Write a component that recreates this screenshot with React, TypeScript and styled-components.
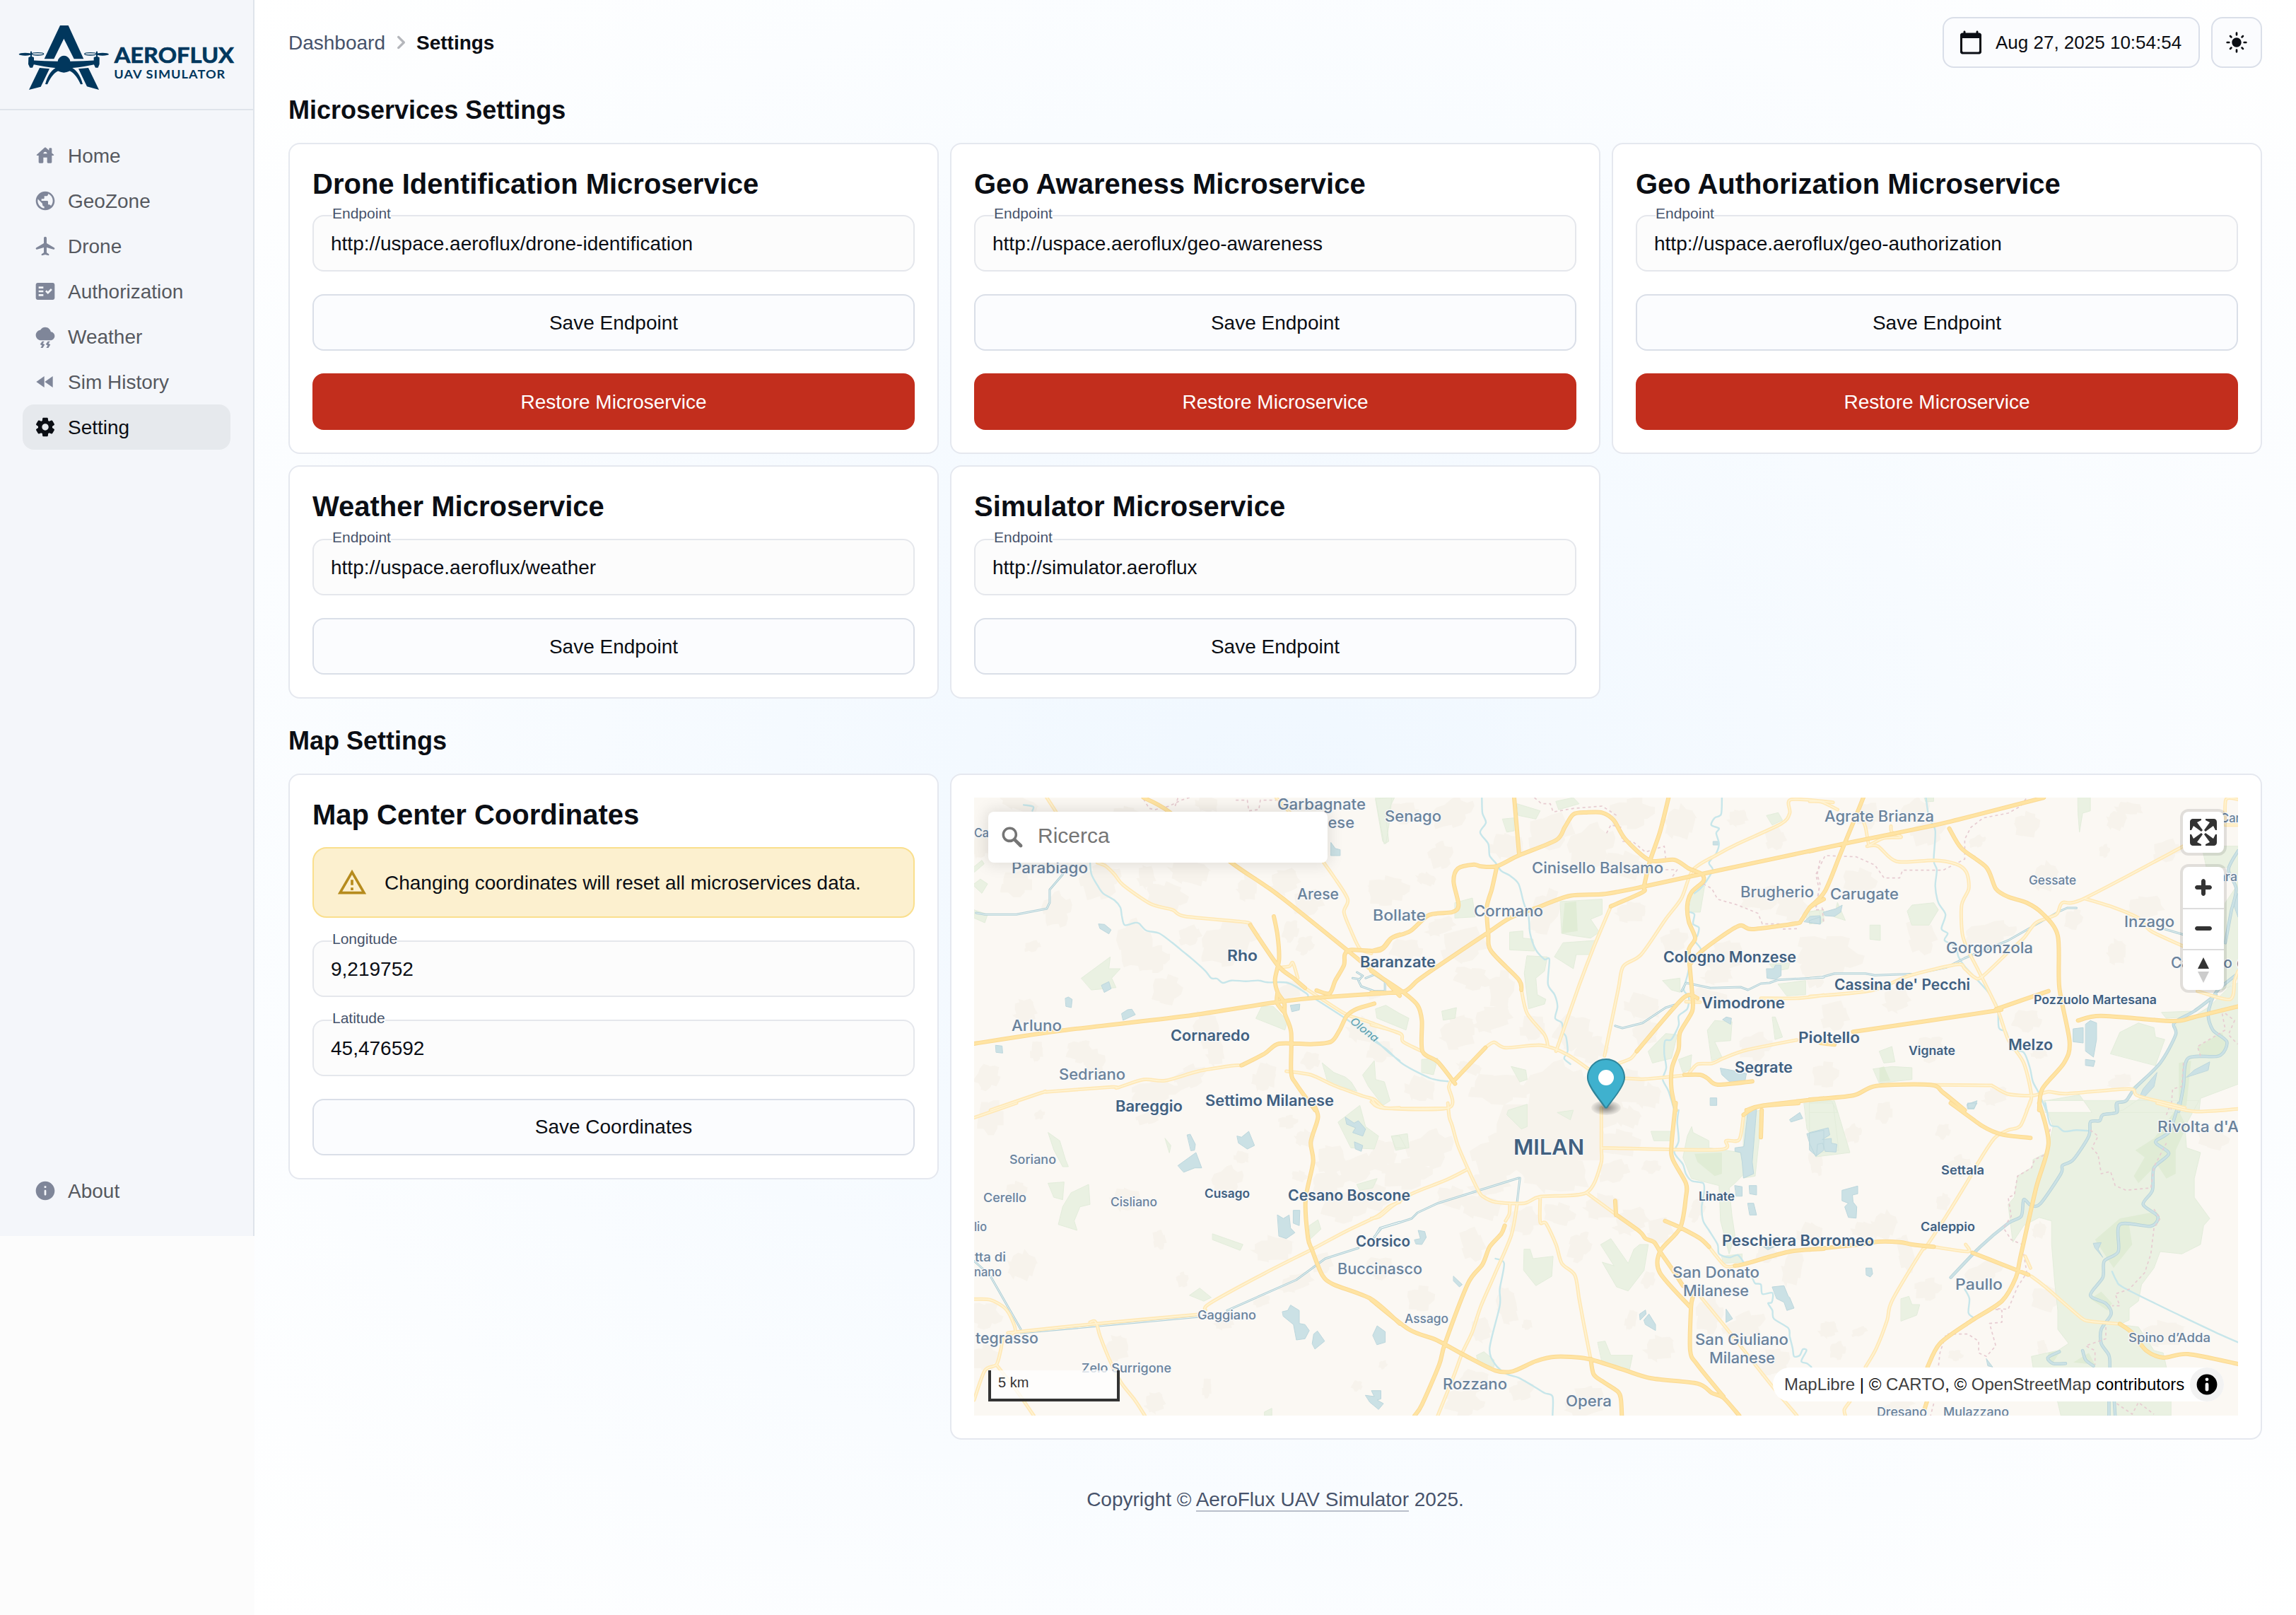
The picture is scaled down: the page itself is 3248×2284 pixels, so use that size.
import React from "react";
import styled, { createGlobalStyle, css } from "styled-components";

const GlobalStyle = createGlobalStyle`
  * { box-sizing: border-box; }
  body {
    margin: 0;
    background: #fcfcfc;
    color: #0b0e14;
    font-family: "Liberation Sans", Arial, sans-serif;
    font-size: 28px;
  }
`;

/* ---------- layout ---------- */

const Page = styled.div`
  display: grid;
  grid-template-columns: 360px 1fr;
  height: 2284px;
  overflow: hidden;
`;

const Sidebar = styled.aside`
  height: 1748px;
  display: flex;
  flex-direction: column;
  background: #f4f6fa;
  border-right: 2px solid #dfe4eb;
`;

const LogoArea = styled.div`
  height: 156px;
  border-bottom: 2px solid #dfe4eb;
  flex: none;
  svg { display: block; }
`;

const Nav = styled.nav<{ $grow?: boolean }>`
  display: flex;
  flex-direction: column;
  padding: 32px;
  ${(p) => p.$grow && css`flex: 1;`}
`;

const NavItem = styled.a<{ $active?: boolean }>`
  display: flex;
  align-items: center;
  gap: 16px;
  width: 294px;
  height: 64px;
  padding: 0 16px;
  border-radius: 16px;
  color: ${(p) => (p.$active ? "#0b0e14" : "#56595f")};
  background: ${(p) => (p.$active ? "#e6e9ed" : "transparent")};
  svg { fill: ${(p) => (p.$active ? "#0b0e14" : "#7f8699")}; }
  span { padding-top: 2px; }
`;

const Main = styled.main`
  display: flex;
  flex-direction: column;
  padding: 24px 48px 0;
  background: radial-gradient(ellipse at 50% 50%, hsl(210, 100%, 97%), hsl(0, 0%, 100%));
`;

const Header = styled.header`
  display: flex;
  align-items: center;
  justify-content: space-between;
  height: 72px;
  margin-bottom: 32px;
`;

const Breadcrumbs = styled.div`
  display: flex;
  align-items: center;
  color: #47536b;
  svg { fill: #b4b6bb; margin: 0 2px; }
  span, strong { padding-top: 2px; }
  strong { color: #0b0e14; }
`;

const HeaderTools = styled.div`
  display: flex;
  gap: 16px;
`;

const HeaderButton = styled.div<{ $width: number }>`
  display: flex;
  align-items: center;
  gap: 17px;
  width: ${(p) => p.$width}px;
  height: 72px;
  padding: 0 ${(p) => (p.$width > 72 ? 20 : 18)}px;
  border: 2px solid #dadfe9;
  border-radius: 16px;
  background: #fbfcfe;
  font-size: 26px;
  white-space: nowrap;
  svg { fill: #0b0e14; flex: none; }
`;

const SectionTitle = styled.h2`
  margin: 0 0 20px;
  height: 54px;
  padding-top: 1px;
  font-size: 36px;
  line-height: 54px;
  font-weight: 700;
`;

const CardGrid = styled.section`
  display: grid;
  grid-template-columns: repeat(3, 920px);
  gap: 16px;
  align-items: start;
  margin-bottom: 32px;
`;

const Card = styled.article<{ $span?: number }>`
  display: flex;
  flex-direction: column;
  gap: 32px;
  padding: 32px;
  border: 2px solid #e5e8ef;
  border-radius: 16px;
  background: #fff;
  grid-column: span ${(p) => p.$span ?? 1};
`;

const CardTitle = styled.h3<{ $gap: number }>`
  margin: 0 0 ${(p) => p.$gap - 34}px;
  font-size: 40px;
  line-height: 46px;
  padding-top: 1px;
  height: 48px;
  font-weight: 700;
`;

const FieldBox = styled.label`
  position: relative;
  display: flex;
  align-items: center;
  height: 80px;
  padding: 2px 24px 0;
  border: 2px solid #e5e7ec;
  border-radius: 16px;
  background: #fcfcfc;
`;

const FieldLabel = styled.span`
  position: absolute;
  left: 26px;
  top: -16px;
  font-size: 21px;
  line-height: 24px;
  color: #47536b;
  background: linear-gradient(#fff 14px, #fcfcfc 14px);
`;

const Button = styled.button<{ $danger?: boolean; $lift?: boolean }>`
  height: 80px;
  padding: ${(p) => (p.$lift ? "0 0 1px" : "2px 0 0")};
  border-radius: 16px;
  font: 28px "Liberation Sans", Arial, sans-serif;
  border: 2px solid ${(p) => (p.$danger ? "#c22e1d" : "#dadfe8")};
  background: ${(p) => (p.$danger ? "#c22e1d" : "#fbfcfe")};
  color: ${(p) => (p.$danger ? "#fff" : "#0b0e14")};
`;

const Alert = styled.div`
  display: flex;
  align-items: center;
  gap: 24px;
  height: 100px;
  padding: 0 32px;
  border: 2px solid #fadf8d;
  border-radius: 20px;
  background: #fcf0cf;
  white-space: nowrap;
  svg { fill: #b68b1d; flex: none; }
  span { padding-top: 2px; }
`;

const Footer = styled.footer`
  margin-top: 36px;
  text-align: center;
  color: #47536b;
  line-height: 34px;
  a { border-bottom: 2px solid #b9bfca; }
`;

/* ---------- map ---------- */

const MapView = styled.div`
  position: relative;
  width: 1788px;
  height: 874px;
  overflow: hidden;
  background: #fbf8f3;
  > svg { display: block; }
`;

const SearchBox = styled.div`
  position: absolute;
  left: 20px;
  top: 20px;
  width: 480px;
  height: 72px;
  display: flex;
  align-items: center;
  gap: 16px;
  padding-left: 14px;
  border-radius: 8px;
  background: #fff;
  box-shadow: 0 0 20px 4px rgba(0, 0, 0, 0.1);
  color: #757575;
  font-size: 30px;
  svg { fill: #757575; }
  span { padding-bottom: 4px; }
`;

const ControlStack = styled.div`
  position: absolute;
  top: 20px;
  right: 20px;
  display: flex;
  flex-direction: column;
  gap: 20px;
`;

const ControlGroup = styled.div`
  width: 58px;
  border-radius: 8px;
  background: #fff;
  box-shadow: 0 0 0 4px rgba(0, 0, 0, 0.1);
`;

const ControlButton = styled.div`
  height: 58px;
  overflow: hidden;
  svg { display: block; fill: #333; }
  & + & { border-top: 2px solid #ddd; }
  & + & svg { margin-top: -2px; }
`;

const Scale = styled.div`
  position: absolute;
  left: 20px;
  bottom: 20px;
  width: 186px;
  height: 44px;
  padding: 3px 10px;
  border: 4px solid #333;
  border-top: 0;
  background: rgba(255, 255, 255, 0.75);
  color: #333;
  font-size: 20px;
  line-height: 28px;
`;

const Attribution = styled.div`
  position: absolute;
  right: 20px;
  bottom: 20px;
  height: 48px;
  width: 638px;
  display: flex;
  align-items: center;
  justify-content: space-between;
  padding-left: 16px;
  border-radius: 24px;
  background: #fff;
  color: #000;
  font-size: 24px;
  white-space: nowrap;
  a { color: #404040; }
`;

const InfoDot = styled.span`
  width: 48px;
  height: 48px;
  border-radius: 50%;
  background: #f2f2f2;
  svg { display: block; }
`;

const PinLayer = styled.svg`
  position: absolute;
  left: 867px;
  top: 369px;
  overflow: visible;
`;

/* ---------- icons ---------- */

const Icon = ({ d, size = 32 }: { d: string; size?: number }) => (
  <svg width={size} height={size} viewBox="0 0 24 24">
    <path d={d} />
  </svg>
);

const paths = {
  home: "M19 9.3V5c0-.55-.45-1-1-1h-1c-.55 0-1 .45-1 1v1.6l-3.33-3c-.38-.34-.96-.34-1.34 0l-8.36 7.53c-.34.3-.13.87.33.87H5v7c0 .55.45 1 1 1h3c.55 0 1-.45 1-1v-5h4v5c0 .55.45 1 1 1h3c.55 0 1-.45 1-1v-7h1.7c.46 0 .68-.57.33-.87L19 9.3zM10 10c0-1.1.9-2 2-2s2 .9 2 2h-4z",
  globe: "M12 2C6.48 2 2 6.48 2 12s4.48 10 10 10 10-4.48 10-10S17.52 2 12 2zm-1 17.93c-3.95-.49-7-3.85-7-7.93 0-.62.08-1.21.21-1.79L9 15v1c0 1.1.9 2 2 2v1.93zm6.9-2.54c-.26-.81-1-1.39-1.9-1.39h-1v-3c0-.55-.45-1-1-1H8v-2h2c.55 0 1-.45 1-1V7h2c1.1 0 2-.9 2-2v-.41c2.93 1.19 5 4.06 5 7.41 0 2.08-.8 3.97-2.1 5.39z",
  plane: "M21.48 13.7L13.5 9V3.5c0-.83-.67-1.5-1.5-1.5s-1.5.67-1.5 1.5V9l-7.98 4.7c-.32.18-.52.53-.52.9 0 .7.67 1.2 1.34 1.01l7.16-2.1V19l-2.26 1.35c-.15.09-.24.26-.24.43v.58c0 .33.31.57.62.49l2.92-.73.46-.12.46.12 2.92.73c.32.08.62-.16.62-.49v-.58c0-.18-.09-.34-.24-.43L13.5 19v-5.5l7.16 2.1c.67.2 1.34-.3 1.34-1 0-.37-.2-.72-.52-.9z",
  check: "M20 3H4c-1.1 0-2 .9-2 2v14c0 1.1.9 2 2 2h16c1.1 0 2-.9 2-2V5c0-1.1-.9-2-2-2zM10 17H5v-2h5v2zm0-4H5v-2h5v2zm0-4H5V7h5v2zm4.82 6L12 12.16l1.41-1.41 1.41 1.42L17.99 9l1.42 1.42L14.82 15z",
  storm: "M17.92 7.02C17.45 4.18 14.97 2 12 2 9.82 2 7.83 3.18 6.78 5.06 4.09 5.41 2 7.74 2 10.5 2 13.53 4.47 16 7.5 16h10c2.48 0 4.5-2.02 4.5-4.5 0-2.34-1.79-4.27-4.08-4.48zM14.8 17l-2.3 3.2 2.1 1.2L13.1 24h2.3l2.1-3.5-2.1-1.2 1.7-2.3h-2.3zm-6 0l-2.3 3.2 2.1 1.2L7.1 24h2.3l2.1-3.5-2.1-1.2 1.7-2.3H8.8z",
  rewind: "M11 18V6l-8.5 6 8.5 6zm.5-6l8.5 6V6l-8.5 6z",
  gear: "M19.5 12c0-.23-.01-.45-.03-.68l1.86-1.41c.4-.3.51-.86.26-1.3l-1.87-3.23c-.25-.44-.79-.62-1.25-.42l-2.15.91c-.37-.26-.76-.49-1.17-.68l-.29-2.31c-.06-.5-.49-.88-.99-.88h-3.73c-.51 0-.94.38-1 .88l-.29 2.31c-.41.19-.8.42-1.17.68l-2.15-.91c-.46-.2-1-.02-1.25.42L2.41 8.62c-.25.44-.14.99.26 1.3l1.86 1.41c-.02.22-.03.44-.03.67s.01.45.03.68l-1.86 1.41c-.4.3-.51.86-.26 1.3l1.87 3.23c.25.44.79.62 1.25.42l2.15-.91c.37.26.76.49 1.17.68l.29 2.31c.06.5.49.88.99.88h3.73c.5 0 .93-.38.99-.88l.29-2.31c.41-.19.8-.42 1.17-.68l2.15.91c.46.2 1 .02 1.25-.42l1.87-3.23c.25-.44.14-.99-.26-1.3l-1.86-1.41c.03-.23.04-.45.04-.68zm-7.46 3.5c-1.93 0-3.5-1.57-3.5-3.5s1.57-3.5 3.5-3.5 3.5 1.57 3.5 3.5-1.57 3.5-3.5 3.5z",
  info: "M12 2C6.48 2 2 6.48 2 12s4.48 10 10 10 10-4.48 10-10S17.52 2 12 2zm0 15c-.55 0-1-.45-1-1v-4c0-.55.45-1 1-1s1 .45 1 1v4c0 .55-.45 1-1 1zm1-8h-2V7h2v2z",
  chevron: "M9.31 6.71c-.39.39-.39 1.02 0 1.41L13.19 12l-3.88 3.88c-.39.39-.39 1.02 0 1.41.39.39 1.02.39 1.41 0l4.59-4.59c.39-.39.39-1.02 0-1.41L10.72 6.7c-.38-.38-1.02-.38-1.41.01z",
  calendar: "M20 3h-1V2c0-.55-.45-1-1-1s-1 .45-1 1v1H7V2c0-.55-.45-1-1-1s-1 .45-1 1v1H4c-1.1 0-2 .9-2 2v16c0 1.1.9 2 2 2h16c1.1 0 2-.9 2-2V5c0-1.1-.9-2-2-2zm-1 18H5c-.55 0-1-.45-1-1V8h16v12c0 .55-.45 1-1 1z",
  sun: "M12 7c-2.76 0-5 2.24-5 5s2.24 5 5 5 5-2.24 5-5-2.24-5-5-5zM2 13h2c.55 0 1-.45 1-1s-.45-1-1-1H2c-.55 0-1 .45-1 1s.45 1 1 1zm18 0h2c.55 0 1-.45 1-1s-.45-1-1-1h-2c-.55 0-1 .45-1 1s.45 1 1 1zM11 2v2c0 .55.45 1 1 1s1-.45 1-1V2c0-.55-.45-1-1-1s-1 .45-1 1zm0 18v2c0 .55.45 1 1 1s1-.45 1-1v-2c0-.55-.45-1-1-1s-1 .45-1 1zM5.99 4.58c-.39-.39-1.03-.39-1.41 0-.39.39-.39 1.03 0 1.41l1.06 1.06c.39.39 1.03.39 1.41 0s.39-1.03 0-1.41L5.99 4.58zm12.37 12.37c-.39-.39-1.03-.39-1.41 0-.39.39-.39 1.03 0 1.41l1.06 1.06c.39.39 1.03.39 1.41 0 .39-.39.39-1.03 0-1.41l-1.06-1.06zm1.06-10.96c.39-.39.39-1.03 0-1.41-.39-.39-1.03-.39-1.41 0l-1.06 1.06c-.39.39-.39 1.03 0 1.41s1.03.39 1.41 0l1.06-1.06zM7.05 18.36c.39-.39.39-1.03 0-1.41-.39-.39-1.03-.39-1.41 0l-1.06 1.06c-.39.39-.39 1.03 0 1.41s1.03.39 1.41 0l1.06-1.06z",
  warning: "M12 5.99L19.53 19H4.47L12 5.99M12 2L1 21h22L12 2zm1 14h-2v2h2v-2zm0-6h-2v4h2v-4z",
};

const mapIcons = {
  full: "M24 16v5.5c0 1.75-.75 2.5-2.5 2.5H16v-1l3-1.5-4-5.5 1-1 5.5 4 1.5-3h1zM6 16l1.5 3 5.5-4 1 1-4 5.5 3 1.5v1H7.5C5.75 24 5 23.25 5 21.5V16h1zm7-11v1l-3 1.5 4 5.5-1 1-5.5-4L6 13H5V7.5C5 5.75 5.75 5 7.5 5H13zm11 2.5c0-1.75-.75-2.5-2.5-2.5H16v1l3 1.5-4 5.5 1 1 5.5-4 1.5 3h1V7.5z",
  plus: "M14.5 8.5c-.75 0-1.5.75-1.5 1.5v3h-3c-.75 0-1.5.75-1.5 1.5S9.25 16 10 16h3v3c0 .75.75 1.5 1.5 1.5S16 19.75 16 19v-3h3c.75 0 1.5-.75 1.5-1.5S19.75 13 19 13h-3v-3c0-.75-.75-1.5-1.5-1.5z",
  minus: "M10 13c-.75 0-1.5.75-1.5 1.5S9.25 16 10 16h9c.75 0 1.5-.75 1.5-1.5S19.75 13 19 13h-9z",
};

const Logo = () => (
  <svg width="358" height="154" viewBox="0 0 1074 462" fill="#01375d">
    <path d="M255 108h35l65 142h-41l-43-86-42 86h-41z" />
    <path d="M168 288l42 4-37 76-50 13zM333 292l42-4 45 93-51-14z" />
    <path d="M130 256q60 4 115 4a27 29 0 0 1 53 0q55 0 115-4v15q-60 14-104 17-14 19-38 20-24-1-38-20-40-3-103-17z" />
    <path d="M192 357q16-60 56-74l10 14q-34 8-57 61zM351 357q-16-60-56-74l-10 14q34 8 57 61z" />
    <path d="M121 244q11-8 23 0v28l-6 15h-11l-7-15zM398 244q12-8 24 0v28l-6 15h-11l-7-15z" />
    <path d="M129 218h6v28h-6zM408 218h6v28h-6z" />
    <ellipse cx="107" cy="230" rx="27" ry="6" />
    <ellipse cx="160" cy="229" rx="25" ry="5" fill="none" stroke="#01375d" strokeWidth="4" />
    <ellipse cx="384" cy="229" rx="25" ry="5" fill="none" stroke="#01375d" strokeWidth="4" />
    <ellipse cx="435" cy="230" rx="27" ry="6" />
    <text x="485" y="266" fontFamily="Lato, sans-serif" fontWeight="700" fontSize="94" textLength="508" lengthAdjust="spacingAndGlyphs" stroke="#01375d" strokeWidth="2">AEROFLUX</text>
    <text x="484" y="333" fontFamily="Lato, sans-serif" fontWeight="700" fontSize="53" letterSpacing="3" textLength="474" lengthAdjust="spacingAndGlyphs">UAV SIMULATOR</text>
  </svg>
);

/* ---------- map geometry ---------- */

type Sheet = "A" | "B" | "C" | "D" | "E" | "F";

// Each survey sheet has its own origin and horizontal/vertical resolution.
const sheets: Record<Sheet, [number, number, number, number]> = {
  A: [-38, -38, 2.45, 3],
  B: [562, -38, 2.45, 3],
  C: [1182, -38, 2.279, 3],
  D: [-38, 432, 2.45, 3],
  E: [562, 432, 2.45, 3],
  F: [1182, 432, 2.279, 3],
};

type Shapes = Partial<Record<Sheet, string>>;

const parse = (sheet: Sheet, line: string) => {
  const [ox, oy, sx, sy] = sheets[sheet];
  return line.trim().split(/\s+/).map((pair) => {
    const [x, y] = pair.split(",").map(Number);
    return [ox + x / sx, oy + y / sy];
  });
};

const straight = (pts: number[][]) => "M" + pts.map((p) => p.map((v) => v.toFixed(1)).join(" ")).join("L");

const smooth = (pts: number[][]) => {
  let d = `M${pts[0][0].toFixed(1)} ${pts[0][1].toFixed(1)}`;
  for (let i = 0; i < pts.length - 1; i++) {
    const p0 = pts[i - 1] ?? pts[i], p1 = pts[i], p2 = pts[i + 1], p3 = pts[i + 2] ?? p2;
    const k = 7;
    d += `C${[p1[0] + (p2[0] - p0[0]) / k, p1[1] + (p2[1] - p0[1]) / k, p2[0] - (p3[0] - p1[0]) / k, p2[1] - (p3[1] - p1[1]) / k, p2[0], p2[1]].map((v) => v.toFixed(1)).join(" ")}`;
  }
  return d;
};

const build = (shapes: Shapes, draw: (pts: number[][]) => string) =>
  (Object.keys(shapes) as Sheet[])
    .flatMap((s) => shapes[s]!.split("|").map((line) => draw(parse(s, line))))
    .join("");

// Built-up areas: centre x, centre y, half width, half height on the sheet.
const towns: Partial<Record<Sheet, number[][]>> = {
  A: [[240, 480, 60, 60], [380, 590, 55, 75], [530, 470, 75, 80], [620, 180, 50, 30], [250, 140, 80, 35], [115, 320, 35, 60], [295, 745, 32, 25], [650, 740, 65, 110], [720, 800, 50, 60], [760, 530, 80, 60], [840, 430, 80, 60], [690, 450, 35, 55], [840, 700, 45, 45], [960, 740, 90, 90], [1010, 690, 70, 60], [760, 930, 55, 70], [1040, 500, 40, 60], [1170, 470, 60, 60], [1250, 560, 60, 60], [1190, 680, 30, 50], [1240, 740, 30, 45], [1510, 520, 55, 60], [1480, 950, 30, 20], [270, 1020, 45, 60], [310, 1190, 25, 50], [140, 1300, 45, 60], [460, 1190, 50, 50], [510, 1240, 40, 60], [900, 1100, 50, 90], [930, 1200, 35, 60], [1100, 1300, 45, 70], [1260, 1230, 35, 40], [720, 1360, 90, 50], [840, 1300, 60, 50], [1190, 930, 45, 40], [1440, 1100, 60, 60], [900, 140, 45, 40], [1500, 1190, 50, 50]],
  B: [[110, 180, 60, 50], [280, 180, 80, 60], [240, 360, 45, 60], [60, 500, 80, 55], [190, 460, 40, 30], [470, 320, 70, 60], [620, 260, 90, 80], [760, 320, 90, 90], [900, 180, 80, 70], [880, 400, 80, 60], [1070, 220, 60, 80], [1270, 200, 40, 40], [1400, 290, 40, 50], [1360, 540, 90, 50], [1460, 580, 60, 60], [600, 600, 50, 110], [900, 600, 60, 50], [240, 660, 60, 40], [320, 740, 90, 80], [120, 760, 60, 50], [350, 880, 70, 50], [450, 930, 45, 90], [300, 1110, 70, 80], [420, 1050, 80, 60], [560, 1090, 50, 60], [700, 1110, 70, 80], [760, 1180, 60, 60], [1050, 720, 50, 50], [1220, 790, 80, 70], [1200, 870, 60, 40], [940, 1000, 70, 60], [1180, 960, 80, 30], [1330, 1170, 60, 60], [1530, 850, 40, 80], [950, 1110, 50, 60], [960, 1380, 50, 60], [170, 1350, 60, 60], [440, 1350, 110, 70], [630, 1340, 110, 100], [740, 1380, 100, 80], [890, 1340, 60, 80], [340, 1260, 50, 30]],
  C: [[190, 190, 40, 60], [340, 170, 50, 50], [380, 260, 60, 60], [700, 230, 45, 60], [990, 210, 35, 50], [1030, 160, 50, 30], [1150, 340, 50, 50], [540, 300, 30, 25], [950, 340, 18, 30], [160, 470, 60, 60], [760, 450, 45, 70], [1080, 580, 70, 55], [360, 700, 50, 90], [580, 690, 90, 50], [60, 780, 110, 90], [850, 630, 30, 50], [990, 770, 35, 60], [280, 970, 50, 60], [80, 1040, 50, 70], [700, 1060, 50, 50], [390, 1180, 50, 60], [50, 1290, 45, 60], [1000, 1320, 45, 35], [600, 1380, 50, 40], [740, 1200, 30, 25]],
  D: [[150, 60, 50, 80], [320, 50, 20, 20], [700, 60, 50, 30], [240, 370, 40, 40], [260, 690, 55, 70], [620, 410, 60, 55], [735, 580, 25, 45], [970, 330, 60, 60], [1180, 80, 35, 30], [1220, 310, 30, 25], [1240, 150, 40, 40], [1330, 240, 60, 70], [1420, 280, 80, 60], [1320, 340, 60, 60], [1370, 440, 80, 70], [1480, 400, 60, 60], [1130, 620, 80, 60], [1210, 760, 70, 40], [1300, 680, 40, 50], [1500, 700, 60, 50], [130, 900, 60, 60], [130, 1080, 50, 60], [590, 1040, 45, 60], [720, 1270, 40, 50], [900, 1210, 18, 50], [1420, 1200, 20, 25], [1510, 1110, 15, 20], [815, 750, 22, 35], [1090, 840, 35, 25], [960, 930, 40, 35], [1020, 230, 30, 30], [1510, 220, 50, 70]],
  E: [[600, 160, 220, 190], [700, 90, 180, 150], [440, 220, 100, 100], [860, 170, 80, 60], [890, 60, 50, 50], [640, 300, 130, 90], [840, 290, 60, 50], [200, 200, 90, 80], [120, 300, 90, 70], [280, 400, 60, 50], [380, 440, 80, 60], [410, 340, 80, 60], [350, 600, 45, 80], [530, 500, 60, 60], [720, 610, 40, 70], [650, 470, 60, 50], [800, 440, 70, 60], [900, 500, 70, 60], [1000, 540, 50, 60], [970, 270, 35, 30], [1130, 450, 25, 60], [170, 830, 50, 60], [470, 860, 40, 90], [380, 960, 40, 60], [540, 940, 20, 25], [360, 1180, 60, 50], [320, 1270, 70, 60], [520, 1220, 45, 45], [740, 1270, 80, 70], [1000, 1040, 60, 60], [900, 920, 22, 50], [960, 750, 25, 40], [1170, 900, 50, 80], [1290, 950, 80, 60], [1390, 1100, 70, 60], [1460, 700, 40, 90], [1520, 560, 50, 60], [1370, 640, 40, 40], [1540, 250, 25, 60]],
  F: [[240, 40, 30, 50], [140, 130, 30, 40], [480, 270, 40, 50], [430, 420, 25, 40], [240, 520, 45, 70], [180, 540, 50, 40], [310, 640, 28, 90], [560, 720, 70, 45], [380, 790, 45, 50], [760, 830, 50, 60], [740, 540, 25, 40], [60, 960, 35, 40], [160, 970, 30, 20], [90, 1050, 28, 40], [470, 1070, 25, 25], [1300, 150, 55, 50], [1140, 980, 80, 60], [280, 1290, 70, 30], [750, 1040, 18, 40], [430, 120, 25, 35]],
};

const townPath = (Object.keys(towns) as Sheet[])
  .flatMap((s) =>
    towns[s]!.map(([cx, cy, rx, ry], n) => {
      const [ox, oy, sx, sy] = sheets[s];
      const tilt = Math.sin(n * 5.1) * 0.35;
      const ring = Array.from({ length: 14 }, (_, i) => {
        const a = (i / 14) * Math.PI * 2;
        const r = 0.9 + 0.14 * Math.sin(n * 7.3 + i * 2.3);
        return [(Math.cos(a) * rx * r) / sx, (Math.sin(a) * ry * r) / sy];
      });
      const pts = ring.flatMap(([x, y], i) => {
        const next = ring[(i + 1) % ring.length];
        return i % 2 ? [[x, y], [next[0], y]] : [[x, y]];
      });
      return (
        straight(
          pts.map(([x, y]) => [
            ox + cx / sx + x * Math.cos(tilt) - y * Math.sin(tilt),
            oy + cy / sy + x * Math.sin(tilt) + y * Math.cos(tilt),
          ])
        ) + "Z"
      );
    })
  )
  .join("");

const greens: Shapes = {
  A: "465,880 565,790 560,840 600,840 570,880 585,920 500,930|1070,1050 1090,1000 1130,1000 1180,1060 1170,1100 1140,1085|1485,1010 1520,995 1568,1030 1600,1050 1590,1100 1490,1050|1300,1240 1340,1280 1380,1300 1400,1320 1420,1360 1320,1325|1440,1290 1480,1230 1485,1310 1515,1320 1535,1400 1510,1420 1460,1340|93,480 115,460 140,480 120,520 93,490|93,590 140,610 130,645 93,625|1485,114 1550,114 1520,190 1530,300 1515,310|90,410 120,380 128,395 95,430",
  B: "655,555 800,545 800,610 760,630 790,685 760,710 700,700 660,690|665,730 775,720 760,780 710,780 700,840 635,790|480,685 525,680 525,710 560,715 565,765 480,760|540,785 610,790 600,850 570,880 575,950 605,970 600,990 545,1010 530,860|290,560 350,540 360,620 290,625|245,1020 295,1005 290,1050 250,1058|175,1225 230,1220 215,1290 175,1280|505,140 585,170 570,205 510,190|455,205 495,200 495,255 470,260|640,130 700,114 720,140 650,165|1115,500 1155,490 1140,600 1100,600|1410,905 1505,890 1505,950 1440,955|1165,1100 1190,1060 1250,1065 1245,1145 1190,1150 1215,1215 1180,1230|960,1190 1020,1115 1060,1120 1040,1220 975,1240|1065,1225 1110,1205 1105,1270 1080,1280|485,1255 535,1270 540,1310 515,1320|1370,190 1410,178 1425,210 1390,230|1500,600 1568,590 1568,640 1510,630|15,120 70,114 65,200 50,310 40,300|1010,890 1070,880 1070,940 1040,930|1390,1045 1400,1045 1425,1130 1400,1140|1380,820 1450,815 1445,840 1400,850",
  C: "970,1200 1000,1110 1060,1070 1110,1090 1115,1130 1145,1140 1115,1250|315,595 330,570 400,560 415,590 385,655 330,655|195,655 228,655 228,720 195,715|205,1265 265,1255 330,1260 330,1310 225,1325|225,1190 265,1170 275,1235 240,1240|1265,320 1381,320 1381,500 1350,410 1280,410|1340,560 1381,480 1381,900 1330,930|865,114 905,114 905,170 880,180 870,260 865,180|1381,880 1290,1000 1240,1040 1180,1070 1185,1120 1130,1250 1040,1345 1070,1385 1010,1440 980,1450 1255,1450 1260,1390 1381,1330|760,1400 870,1375 910,1450 760,1450|0,600 30,590 40,645 0,650|90,560 115,635 80,620|1135,1025 1230,1020 1220,1045 1150,1050|0,1400 70,1400 90,1450 0,1450|370,114 400,114 400,130 375,132",
  D: "350,125 390,160 410,240 420,270 400,270 370,200|350,340 405,335 400,410 370,400|430,380 490,345 495,430 460,440 440,500 450,540 385,515 400,440|920,555 1025,600 1015,625 920,580|840,815 875,785 915,825 890,840|1355,80 1430,10 1450,100 1495,140 1480,195 1400,190|1255,520 1285,495 1295,535 1260,575|1420,345 1490,320 1475,360 1430,370|1100,1310 1125,1295 1125,1326 1100,1326|755,150 775,180 770,210|1540,140 1568,140 1590,190 1555,190",
  E: "475,30 540,5 540,100 520,110 470,50|645,40 700,30 690,70|70,140 125,130 130,190 85,200|970,120 1040,120 1035,160 980,160|1080,230 1095,140 1110,100 1115,125 1170,160 1170,190 1280,210 1300,290 1260,340 1240,360 1250,480 1260,560 1240,640 1210,500 1205,350 1110,320|1290,40 1355,30 1330,310 1290,318|530,620 550,620 560,660 630,650 625,735 570,775 528,710|795,600 830,575 890,680 910,620 930,600 960,600 945,710 890,797 850,780 800,675 840,690|785,1015 810,1010 830,1070 905,1070 895,1130 800,1100|365,1070 390,1055 425,1090 425,1120 370,1100|1215,650 1285,640 1285,675 1220,680|1500,0 1600,0 1620,200 1560,210 1510,110",
  F: "755,-10 785,100 765,210 720,240 720,270 670,310 660,400 640,430 655,590 690,520 740,485 780,500 780,600 790,760 800,880 800,960 835,1020 800,1050 715,1075 720,1120 800,1270 810,1326 1165,1326 1165,1266 1150,1120 1140,1060 1110,1050 1060,950 1000,940 1030,920 1030,870 1060,840 1070,770 1110,700 1130,630 1200,640 1260,600 1270,520 1290,490 1240,400 1240,320 1260,210 1215,190 1210,100 1255,-10|295,830 320,820 330,855 355,855 345,900 295,925|0,0 80,-10 130,210 20,228 0,180",
};

const deepGreens: Shapes = {
  B: "670,560 710,555 715,680 660,690",
  C: "1250,1170 1330,1110 1345,1170 1320,1210 1260,1210|1190,1240 1230,1230 1215,1420 1190,1440|225,1260 240,1255 260,1315 225,1320",
  E: "1120,215 1215,210 1215,300 1190,310 1130,250",
  F: "1185,20 1215,100 1180,200 1180,300 1150,320 1120,260 1060,340 1045,310 1080,230 1050,200 1110,150|1000,490 1120,460 1120,520 1030,520 1040,600 980,700 930,600 920,580|770,1060 810,1050 780,1110 765,1090|850,1100 900,1060 920,1110|905,830 940,800 975,850 960,880",
};

const lakes: Shapes = {
  A: "525,650 545,652 568,675 560,692 530,670|535,910 560,895 568,925 545,940|410,965 420,960 433,970 430,1005 412,1000|605,1030 625,1014 640,1012 652,1035 610,1058|168,1165 190,1168 192,1198 170,1195|1190,995 1222,990 1220,1015 1195,1022|1330,305 1345,330 1362,335 1362,360 1330,360",
  B: "1370,840 1395,840 1400,825 1420,825 1420,870 1400,885 1372,880|1500,640 1520,618 1555,615 1555,650|1210,1262 1245,1270 1300,1285 1295,1315 1240,1318 1215,1290|1218,1055 1230,1045 1248,1050 1245,1075|1175,1388 1197,1388 1197,1420 1175,1420|1185,300 1203,300 1203,315 1185,315",
  C: "850,1095 882,1090 882,1155 850,1150|890,1075 905,1060 925,1070 925,1140 915,1215 890,1190|890,1225 920,1230 915,1255 890,1250|45,600 85,585 105,570 100,600 80,618 50,615|0,635 35,620 35,650 0,645|508,1415 540,1400 530,1435 510,1435|1065,1380 1075,1350 1120,1280 1110,1340 1075,1390|1215,1300 1240,1270 1290,1235 1285,1270|1365,560 1381,520 1381,620",
  D: "832,135 842,132 860,175 857,200 845,202|800,265 862,210 882,275 858,275 820,293|1005,140 1020,145 1045,120 1065,180 1040,195 1010,170|1145,475 1165,490 1185,475 1190,530 1205,550 1175,575 1150,565|1200,455 1222,455 1220,520 1200,510|1162,885 1180,880 1190,857 1220,880 1220,935 1240,940 1255,965 1240,1000 1210,1005 1200,940 1165,905|1265,1020 1270,980 1283,967 1308,1010 1275,1043|1475,985 1490,945 1518,970 1518,1015 1490,1025|1380,60 1410,85 1425,75 1450,110 1440,140 1405,125 1415,105 1385,90|1412,165 1440,180 1435,205 1415,195|1450,1240 1480,1245 1470,1220 1503,1220 1503,1255 1490,1260 1512,1275 1495,1300 1465,1270",
  E: "150,580 170,575 162,540 185,545 190,570 175,600 155,598|285,735 315,770 305,780 285,755|930,895 950,878 952,895 932,920|945,920 962,895 985,940 985,965 950,940|1230,875 1252,915 1230,930|1390,780 1430,775 1445,820 1450,825 1465,870 1440,880 1430,845 1405,830|1305,40 1335,25 1320,250 1325,300 1290,318 1285,250 1280,210 1260,205 1260,190 1290,185|1450,70 1485,40 1495,65 1455,80|1260,350 1285,355 1285,395 1265,395|1310,350 1335,350 1335,390 1312,385|1305,425 1325,425 1335,475 1312,475|1510,130 1568,115 1568,200 1540,226 1520,175|1360,610 1395,610 1375,622",
  F: "0,125 60,105 65,135 40,155 70,150 70,170 88,175 85,208 50,205 42,170 25,175 22,225 0,200|105,370 155,352 155,385 138,390 140,420 152,440 150,488 125,485 113,440 125,425 105,415|182,700 200,700 203,725 195,738 183,730|510,0 540,0 530,22 512,22|915,595 940,592 930,620 945,655 920,615|570,1085 590,1120 575,1115",
};

const rivers: Shapes = {
  A: "495,390 500,440 520,485 540,520 580,550 600,580 605,615 615,655 650,645 665,648 690,678 735,690 780,730 820,770 850,800 895,850 915,880 935,882 955,900 985,890 1035,893 1080,890 1110,898 1180,900 1245,945 1250,960|1265,960 1385,1055 1480,1140 1530,1195 1568,1230|265,145 298,152 295,170",
  B: "0,1140 50,1180 110,1245 205,1305 265,1318|383,114 385,180 397,220 377,262 405,310 410,360 430,390 450,425 480,445 510,480 528,560 545,620 550,690 570,760 600,800 617,800 612,905 635,950 645,1000 637,1050 660,1070 665,1110 675,1130 680,1190 668,1220 690,1245|1215,114 1212,185 1190,200 1178,230 1205,245 1195,265 1205,310 1195,350 1170,390 1183,420 1160,470 1140,500 1120,520|1105,600 1120,610 1115,650 1135,665 1130,700 1120,720 1142,760 1110,800 1095,870 1083,930 1100,960 1095,1010 1065,1040 1065,1080 1040,1140 1018,1145 1015,1200 1022,1260 1010,1310 1030,1360 1050,1440",
  C: "375,114 385,200 405,255 400,380 410,420 405,490 415,560 438,610 425,670 445,690 435,720 470,745 480,790 500,830 570,930 605,1000 610,1090 635,1110 650,1180 690,1195 710,1260 720,1320 740,1370 762,1440",
  E: "1065,30 1060,80 1065,160 1050,210 1080,260 1090,300 1110,330 1150,340 1153,380 1145,440 1150,500 1170,540 1200,600 1205,640 1240,655 1270,645 1290,675|1320,740 1330,765 1350,770 1355,810 1390,805 1388,845 1375,850 1390,880 1395,915 1445,955 1450,990 1460,1040 1465,1075 1485,1070 1495,1045 1508,1050 1490,1095 1510,1105 1525,1120|430,660 460,680 445,790 445,860 410,1040 430,1110 470,1150 510,1165 560,1200 600,1230 628,1245 628,1326",
  F: "500,790 515,830 512,890 530,912|975,715 990,755 1015,785 1200,905 1320,980 1381,1015|760,0 775,90 800,100 820,120 860,115 900,118",
};

const bigRivers: Shapes = {
  C: "1381,340 1350,420 1375,500 1360,590|1381,860 1310,940 1285,1030 1300,1100 1345,1150 1320,1210 1220,1220 1205,1340 1190,1445|1360,590 1340,730|1310,950 1240,1020 1175,1070 1180,1120 1130,1240 1050,1345 1020,1400 990,1410 990,1445",
  F: "1190,0 1160,120 1115,165 1158,215 1110,275 1105,370 1075,430 1122,480 1100,522 1000,515 995,630 950,670 945,740 905,815 955,850 972,895 940,960 940,1020 965,1070 968,1120|965,1266 965,1326|982,1266 985,1326|990,0 990,40 945,50 935,75 905,80 900,140 850,240 815,265 810,300 745,425 715,435 690,410 682,480 640,510 550,610 455,740|805,1055 768,1080 785,1105 825,1105|880,1050 890,1090 915,1115",
};

const canals: Shapes = {
  A: "100,603 130,610 240,610 345,585 355,560 355,505 400,440|1420,855 1440,870 1425,890 1435,915 1480,935 1517,935 1517,895 1480,865 1450,880|1405,880 1430,885",
  B: "845,1082 870,1092 940,1070 1020,1005 1060,990|1075,935 1090,900 1175,922 1280,918 1305,930 1350,903 1380,900 1410,887 1568,877",
  C: "0,880 40,875 80,860 180,860 210,868 340,862 440,835 500,795 640,720 800,600 830,582 860,582|1145,672 1205,695",
  D: "1568,505 1500,530 1480,570|1425,615 1310,660 1210,750 970,880|93,670 125,705|150,735 255,960|255,975 500,948 870,907",
  E: "510,318 230,425 160,465 140,490 90,510 35,530 10,568|515,318 505,420",
};

const minorRoads: Shapes = {
  A: "345,114 380,180|520,390 550,405 580,440 610,485 705,565 780,590 825,618 1030,642 1050,655|1240,922 1300,970 1385,1035 1460,1065 1568,1115|1305,390 1340,450 1388,545 1375,600 1400,680 1430,755 1470,775|1020,1250 985,1252 870,1275 755,1315 680,1310 590,1345 570,1342 350,1362 330,1365 150,1440|1175,1275 1260,1290 1340,1335 1440,1380 1480,1395 1515,1430 1568,1430|1150,835 1185,830 1198,815 1215,880|1140,114 1190,180",
  B: "0,1078 100,1115 110,1150 175,1190|520,930 540,1030 600,1120 612,1170|830,575 770,750 720,910 640,1190|1600,134 1455,122 1450,180 1420,225 1270,310 1200,355 1115,420 1075,540 1020,630 935,780 873,830 855,930 808,1210|920,1190 900,1220 860,1240|880,1305 950,1308 1100,1290|1100,1285 1130,1245 1180,1242 1220,1220 1300,1185 1475,1142|1350,965 1480,965 1568,952|395,1175 425,1152 465,1175 590,1165 680,1205 780,1290|280,1310 268,1340 268,1430 45,1430 0,1390|1090,980 1140,982",
  C: "0,130 40,133 90,165|165,190 180,240 190,310 200,310 240,285 295,282 265,260 262,235|185,320 220,320 280,385 400,380 470,395 505,430 513,500 490,570 492,690 510,760 545,850 605,1010 640,1140 690,1240 715,1380 700,1440|0,958 200,932 320,870 475,822 500,840 530,875 555,875 640,770 690,710 730,645 795,610 815,560 885,542 1220,310|885,542 980,580 1060,625 1100,680 1205,745|390,1333 570,1335 590,1338 640,1372 720,1378 770,1362 830,1370 1030,1350 1060,1380 1210,1430|1381,122 1342,122 1340,230|1250,935 1355,970 1370,890 1381,850|1340,230 1381,230",
  D: "240,0 93,62|93,832 150,835 200,870 225,920 235,970 195,1000 185,1050 170,1110 130,1135 93,1260|170,1110 240,1220 300,1326|210,975 500,938 870,897|495,930 510,925 520,945 530,990 570,1110 605,1190 650,1260 685,1326|895,880 910,850 1100,722 1265,620 1380,545 1490,480 1530,440 1568,420",
  E: "0,-5 45,22 265,22|265,0 270,60 280,95 300,180 335,280 370,370 385,395 430,420 530,425 585,397 745,380 795,260 797,190 797,20|335,280 262,325 140,385 75,435 30,480 0,490|745,380 800,430 850,475|797,190 1200,198 1230,160 1275,155 1290,50|1170,610 1225,690 1260,690|480,425 478,470 465,500|505,430 485,560 430,720 380,860 350,970 315,1060 285,1160 230,1326|585,397 585,505 605,510 640,600 660,680 705,730 720,830 735,930 760,1085|1140,820 1240,970 1395,1210 1475,1326",
  F: "400,610 510,630 503,600|712,-10 680,95 640,115 595,150 540,260 510,330 440,480 375,610 360,630 265,840 250,920 215,1040 180,1120|130,1266 112,1300 115,1326|715,735 760,780 870,905 900,925 1000,937|1120,0 1240,35 1381,25|695,650 712,700",
};

const majorRoads: Shapes = {
  A: "680,114 770,175 985,390 1145,525 1390,765 1465,840 1568,935|93,1158 400,1102 820,1042 1150,980 1290,962 1568,940|1132,618 1145,700 1150,800 1136,885 1145,940 1168,985 1170,1030 1192,1110 1192,1280 1210,1330 1275,1440|1145,940 1143,985 1168,1025|1050,655 1145,825 1200,880 1240,922|1280,932 1325,945 1345,890 1375,825 1378,780 1400,760 1500,762 1540,710 1568,695|1480,988 1420,1010 1385,1040 1360,1100 1330,1150 1260,1160 1150,1158 1100,1200 1020,1250|1530,905 1568,955",
  B: "0,850 105,935 160,995 175,1060 177,1190 230,1235 290,1328|0,942 110,938 160,890 220,838 400,690 480,625 580,578 690,530 810,523 950,490 1145,438 1568,328|0,765 40,750 70,710 135,680 200,612 280,600 302,570 285,470 300,415 355,398 380,406 435,405 510,360 640,295 670,240 700,185 745,177 800,178 840,210 880,290 965,380 1050,378 1100,415 1145,438 1150,470 1110,515 1095,570 1100,640 1122,710 1100,760 1105,850 1112,950 1112,1020 1070,1110 1065,1180 1042,1260 1040,1350 1055,1440|495,114 512,355|435,405 418,500 400,580 405,690 415,765 510,885 520,930|1030,114 1000,260 965,385 945,490 940,515 830,575|1105,820 1150,760 1270,660 1320,672 1470,648 1490,635 1520,580 1568,545|1130,965 1080,965 920,1190|1085,1290 1140,1290 1165,1305 1200,1332 1320,1318|290,1310 395,1175|1300,1440 1360,1420 1568,1390",
  C: "0,342 110,310 390,235 480,207 755,114|0,580 50,510 100,350 150,190 173,114|450,245 490,330 570,410 600,500 640,535 700,560 750,605 800,700 805,920 838,1150 820,1240 750,1350 740,1440|140,1108 590,1020 605,1010 770,935|865,1060 940,1040 1170,1062 1240,1045 1381,1000|0,1395 140,1378 215,1337 390,1333 430,1365 500,1440|35,1155 80,1162",
  D: "1268,0 1285,60 1260,165 1268,250 1242,410 1250,570 1265,625 1300,730 1340,770 1470,832 1568,935",
  E: "0,835 130,960 225,1005 320,1068 430,1135 490,1138 570,1095 640,1076 750,1085 870,1130 970,1168 1130,1190 1180,1230 1220,1250 1275,1326|1055,0 1040,180 1045,240 1090,340 1090,400 1070,530 1000,630 1000,720 1105,865|1000,630 1040,700 1080,775|1115,820 1108,865 1105,1050 1130,1110 1220,1245|850,475 930,545 950,575 980,590 1000,630|845,415 848,475|1290,50 1340,15 1480,0|1018,500 1070,528 1140,575 1170,610|1260,690 1295,682 1450,630 1568,618|462,520 450,555 410,610 385,685 335,765 255,1020 235,1110 175,1280 150,1326|760,1085 770,1150 800,1180 855,1225 865,1260 868,1326|1353,30 1350,145",
  F: "455,0 560,100 620,133 712,148|0,622 160,600 220,588 290,590 330,600 400,610|525,635 705,728|740,0 770,170 730,360 680,650 665,740 620,840 520,925 420,1020 380,1120|378,1266 370,1300|1000,937 1040,975 1085,1050 1140,1080 1220,1065 1381,1107",
};

const borders: Shapes = {
  A: "680,120 700,160 720,165 770,150 810,125 840,114|790,150 800,114|1000,125 1040,125 1045,170 1080,165 1085,125 1140,125",
  B: "565,114 590,140 620,140 630,175 700,160 800,150 850,190|815,265 830,230 865,240 870,300 905,300 950,345 1015,320 1020,370|1000,420 1060,420 1040,455|1150,480 1180,500 1200,545 1270,570 1340,605 1355,650 1420,650 1420,672 1480,670|1555,380 1545,440 1555,480 1540,590 1568,590",
  C: "20,580 30,500 20,440 50,360 150,365 210,400 240,455 290,455 300,422 430,422 500,375 500,290 520,240 560,200 640,180 680,150 700,114|40,580 45,640|1330,1030 1340,1100 1250,1170 1260,1210|1340,1030 1370,1060 1350,1120 1380,1160|1205,1240 1200,1340 1170,1350 1165,1440",
  F: "775,110 765,215 725,240 715,275 670,310 660,390 640,400 650,480 625,530 650,580 685,600 700,720 670,780 640,875 580,870 620,880 620,930 580,935 600,1030 570,1075 545,1060 545,1010 510,980 440,980 420,1060 415,1120|400,1275 390,1326|905,115 930,140 910,190 930,220 940,300 970,290 985,350 1020,370 1100,360 1110,270 1150,170|1150,50 1165,0|1110,450 1130,490 1110,530 1100,640 1080,720 1030,790 985,810 1000,860 975,860|955,950 955,1000 890,1030 920,1050 920,1110|990,1275 1040,1320 1060,1270 1110,1320",
};

type Label = [text: string, x: number, y: number, width: number, tone?: "dark" | "soft", size?: number];

const labels: Label[] = [
  ["Garbagnate", 429, 16, 125], ["Milanese", 444, 42, 94], ["Ca", 0, 55, 21, "soft", 17],
  ["Parabiago", 53, 106, 108], ["Arese", 457, 143, 59], ["Bollate", 564, 173, 75],
  ["Rho", 358, 230, 43, "dark"], ["Baranzate", 546, 239, 107, "dark"], ["Arluno", 53, 329, 71],
  ["Cornaredo", 278, 343, 112, "dark"], ["Sedriano", 120, 398, 94], ["Settimo Milanese", 327, 435, 182, "dark"],
  ["Bareggio", 200, 443, 95, "dark"], ["Soriano", 50, 517, 66, "soft", 17], ["Cerello", 13, 571, 61, "soft", 17],
  ["lio", 0, 612, 18, "soft", 17], ["tta di", 1, 655, 44, "soft", 17], ["nano", 0, 676, 39, "soft", 17],
  ["Cisliano", 193, 577, 66, "soft", 17], ["Cusago", 326, 565, 64, "dark", 17], ["Cesano Boscone", 444, 569, 173, "dark"],
  ["Corsico", 540, 634, 77, "dark"], ["Buccinasco", 514, 673, 120], ["Gaggiano", 316, 737, 83, "soft", 17],
  ["tegrasso", 2, 771, 89], ["Zelo Surrigone", 152, 812, 127, "soft", 17], ["Senago", 581, 33, 80],
  ["Cinisello Balsamo", 789, 106, 186], ["Cormano", 707, 167, 98], ["Brugherio", 1084, 140, 104],
  ["Cologno Monzese", 975, 232, 188, "dark"], ["Vimodrone", 1029, 297, 118, "dark"], ["Segrate", 1076, 388, 82, "dark"],
  ["Pioltello", 1166, 346, 87, "dark"], ["Agrate Brianza", 1203, 33, 155], ["Carugate", 1211, 143, 97],
  ["Gessate", 1492, 122, 67, "soft", 17], ["Gorgonzola", 1375, 219, 123], ["Inzago", 1627, 182, 71],
  ["Cassano", 1693, 240, 87], ["d'Adda", 1786, 240, 70], ["Cassina de' Pecchi", 1217, 271, 192, "dark"],
  ["Pozzuolo Martesana", 1499, 291, 174, "dark", 17], ["Melzo", 1463, 356, 63, "dark"], ["Vignate", 1322, 363, 66, "dark", 17],
  ["Car", 1763, 34, 28, "soft", 17], ["ara", 1760, 117, 27, "soft", 17], ["MILAN", 763, 504, 100, "dark", 30],
  ["Linate", 1025, 569, 51, "dark", 17], ["Peschiera Borromeo", 1058, 633, 215, "dark"], ["San Donato", 988, 678, 123],
  ["Milanese", 1003, 704, 93], ["San Giuliano", 1020, 773, 132], ["Milanese", 1040, 799, 93],
  ["Assago", 609, 742, 62, "soft", 17], ["Rozzano", 663, 836, 91], ["Opera", 837, 860, 65],
  ["Rivolta d'Adda", 1674, 472, 156], ["Settala", 1368, 532, 61, "dark", 17], ["Caleppio", 1339, 612, 77, "dark", 17],
  ["Paullo", 1388, 695, 67], ["Spino d’Adda", 1633, 769, 116, "soft", 17], ["Dresano", 1277, 874, 71, "soft", 17],
  ["Mulazzano", 1371, 874, 93, "soft", 17],
];

const MapCanvas = () => {
  const minor = build(minorRoads, smooth);
  const major = build(majorRoads, smooth);
  const water = build(rivers, smooth);
  const wide = build(bigRivers, smooth);
  const canal = build(canals, straight);
  return (
    <svg width="1788" height="874" viewBox="0 0 1788 874" fill="none" strokeLinecap="round" strokeLinejoin="round">
      <path d={townPath} fill="#f7f3ec" />
      <path d={build(greens, (p) => straight(p) + "Z")} fill="#eaf1e2" stroke="#e3eddb" />
      <path d={build(deepGreens, (p) => straight(p) + "Z")} fill="#e0ecd5" />
      <path d={build(lakes, (p) => straight(p) + "Z")} fill="#cbe1e5" stroke="#bcd7dd" />
      <path d={water} stroke="#c7e6ea" strokeWidth="2.4" />
      <path d={wide} stroke="#b3d1d7" strokeWidth="4.5" />
      <path d={wide} stroke="#cbe1e5" strokeWidth="3" />
      <path d={canal} stroke="#aecfd6" strokeWidth="3" />
      <path d={canal} stroke="#eef5f5" strokeWidth="1" />
      <path d={build(borders, straight)} stroke="#e7ccd1" strokeWidth="1.7" strokeDasharray="4 4" strokeLinecap="butt" />
      <path d={minor} stroke="#ffe8b6" strokeWidth="5" />
      <path d={minor} stroke="#fff3d2" strokeWidth="1.8" />
      <path d={major} stroke="#fbd992" strokeWidth="6" />
      <path d={major} stroke="#ffe4a3" strokeWidth="4" />
      <text x="531" y="318" transform="rotate(38 531 318)" fill="#5c9cab" stroke="#e7f3f4" strokeWidth="2" paintOrder="stroke" fontFamily="Inter, sans-serif" fontStyle="italic" fontSize="15" textLength="46" lengthAdjust="spacingAndGlyphs">Olona</text>
      {labels.map(([text, x, y, width, tone = "soft", size = 21]) => (
        <text
          key={text + y}
          x={x}
          y={y + 0.5}
          textLength={width}
          lengthAdjust="spacingAndGlyphs"
          fontFamily="Inter, sans-serif"
          fontWeight={tone === "dark" ? 600 : 500}
          fontSize={size}
          fill={tone === "dark" ? "#41607f" : "#6a829a"}
          stroke="#f6f8fa"
          strokeWidth="2.5"
          paintOrder="stroke"
        >
          {text}
        </text>
      ))}
    </svg>
  );
};

const Pin = () => (
  <PinLayer width="54" height="82" viewBox="0 0 27 41">
    <defs>
      <radialGradient id="pin-shadow">
        <stop offset="10%" stopOpacity="0.42" />
        <stop offset="100%" stopOpacity="0.04" />
      </radialGradient>
    </defs>
    <ellipse cx="13.5" cy="34.8" rx="10.5" ry="5.25" fill="url(#pin-shadow)" />
    <path fill="#3fb1ce" d="M27 13.5C27 19.07 20.25 27 14.75 34.5C14.02 35.5 12.98 35.5 12.25 34.5C6.75 27 0 19.22 0 13.5C0 6.04 6.04 0 13.5 0C20.96 0 27 6.04 27 13.5Z" />
    <path opacity="0.25" d="M13.5 0C6.04 0 0 6.04 0 13.5C0 19.22 6.75 27 12.25 34.5C13 35.52 14.02 35.5 14.75 34.5C20.25 27 27 19.07 27 13.5C27 6.04 20.96 0 13.5 0ZM13.5 1C20.42 1 26 6.58 26 13.5C26 15.9 24.5 19.18 22.22 22.74C19.95 26.3 16.71 30.14 13.94 33.91C13.74 34.18 13.61 34.32 13.5 34.44C13.39 34.32 13.26 34.18 13.06 33.91C10.28 30.13 7.41 26.31 5.02 22.77C2.62 19.23 1 15.95 1 13.5C1 6.58 6.58 1 13.5 1Z" />
    <circle cx="13.5" cy="13.5" r="5.5" fill="#fff" />
  </PinLayer>
);

const MapIcon = ({ d }: { d: string }) => (
  <svg width="58" height="58" viewBox="0 0 29 29"><path d={d} /></svg>
);

/* ---------- page ---------- */

const Field = ({ label, value }: { label: string; value: string }) => (
  <FieldBox>
    <FieldLabel>{label}</FieldLabel>
    {value}
  </FieldBox>
);

const services = [
  { title: "Drone Identification Microservice", url: "http://uspace.aeroflux/drone-identification", restore: true },
  { title: "Geo Awareness Microservice", url: "http://uspace.aeroflux/geo-awareness", restore: true },
  { title: "Geo Authorization Microservice", url: "http://uspace.aeroflux/geo-authorization", restore: true },
  { title: "Weather Microservice", url: "http://uspace.aeroflux/weather", restore: false },
  { title: "Simulator Microservice", url: "http://simulator.aeroflux", restore: false },
];

const navItems = [
  { label: "Home", icon: paths.home },
  { label: "GeoZone", icon: paths.globe },
  { label: "Drone", icon: paths.plane },
  { label: "Authorization", icon: paths.check },
  { label: "Weather", icon: paths.storm },
  { label: "Sim History", icon: paths.rewind },
  { label: "Setting", icon: paths.gear, active: true },
];

export default function App() {
  return (
    <>
      <GlobalStyle />
      <Page>
        <Sidebar>
          <LogoArea><Logo /></LogoArea>
          <Nav $grow>
            {navItems.map((item) => (
              <NavItem key={item.label} $active={item.active}>
                <Icon d={item.icon} />
                <span>{item.label}</span>
              </NavItem>
            ))}
          </Nav>
          <Nav>
            <NavItem><Icon d={paths.info} /><span>About</span></NavItem>
          </Nav>
        </Sidebar>
        <Main>
          <Header>
            <Breadcrumbs>
              <span>Dashboard</span>
              <Icon d={paths.chevron} size={40} />
              <strong>Settings</strong>
            </Breadcrumbs>
            <HeaderTools>
              <HeaderButton $width={364}>
                <Icon d={paths.calendar} size={36} />
                Aug 27, 2025 10:54:54
              </HeaderButton>
              <HeaderButton $width={72}><Icon d={paths.sun} size={32} /></HeaderButton>
            </HeaderTools>
          </Header>

          <SectionTitle>Microservices Settings</SectionTitle>
          <CardGrid>
            {services.map((s) => (
              <Card key={s.title}>
                <CardTitle $gap={s.restore ? 22 : 24}>{s.title}</CardTitle>
                <Field label="Endpoint" value={s.url} />
                <Button>Save Endpoint</Button>
                {s.restore && <Button $danger>Restore Microservice</Button>}
              </Card>
            ))}
          </CardGrid>

          <SectionTitle>Map Settings</SectionTitle>
          <CardGrid>
            <Card>
              <CardTitle $gap={24}>Map Center Coordinates</CardTitle>
              <Alert>
                <Icon d={paths.warning} size={44} />
                <span>Changing coordinates will reset all microservices data.</span>
              </Alert>
              <Field label="Longitude" value="9,219752" />
              <Field label="Latitude" value="45,476592" />
              <Button $lift>Save Coordinates</Button>
            </Card>
            <Card $span={2}>
              <MapView>
                <MapCanvas />
                <Pin />
                <SearchBox>
                  <svg width="40" height="40" viewBox="0 0 18 18">
                    <path d="M7.4 2.5c-2.7 0-4.9 2.2-4.9 4.9s2.2 4.9 4.9 4.9c1 0 1.8-.2 2.5-.8l3.7 3.7c.2.2.4.3.8.3.7 0 1.1-.4 1.1-1.1 0-.3-.1-.5-.3-.8L11.4 10c.4-.8.8-1.6.8-2.5.1-2.8-2.1-5-4.8-5zm0 1.6c1.8 0 3.2 1.4 3.2 3.2s-1.4 3.2-3.2 3.2-3.3-1.3-3.3-3.1 1.4-3.3 3.3-3.3z" />
                  </svg>
                  <span>Ricerca</span>
                </SearchBox>
                <ControlStack>
                  <ControlGroup>
                    <ControlButton><MapIcon d={mapIcons.full} /></ControlButton>
                  </ControlGroup>
                  <ControlGroup>
                    <ControlButton><MapIcon d={mapIcons.plus} /></ControlButton>
                    <ControlButton><MapIcon d={mapIcons.minus} /></ControlButton>
                    <ControlButton>
                      <svg width="58" height="58" viewBox="0 0 29 29">
                        <path d="M10.5 14l4-8 4 8h-8z" />
                        <path d="M10.5 16l4 8 4-8h-8z" fill="#ccc" />
                      </svg>
                    </ControlButton>
                  </ControlGroup>
                </ControlStack>
                <Scale>5 km</Scale>
                <Attribution>
                  <span><a>MapLibre</a> | © <a>CARTO</a>, © <a>OpenStreetMap</a> contributors</span>
                  <InfoDot>
                    <svg width="48" height="48" viewBox="0 0 20 20" fillRule="evenodd">
                      <path d="M4 10a6 6 0 1 0 12 0 6 6 0 1 0-12 0m5-3a1 1 0 1 0 2 0 1 1 0 1 0-2 0m0 3a1 1 0 1 1 2 0v3a1 1 0 1 1-2 0" />
                    </svg>
                  </InfoDot>
                </Attribution>
              </MapView>
            </Card>
          </CardGrid>
          <Footer>Copyright © <a>AeroFlux UAV Simulator</a> 2025.</Footer>
        </Main>
      </Page>
    </>
  );
}
